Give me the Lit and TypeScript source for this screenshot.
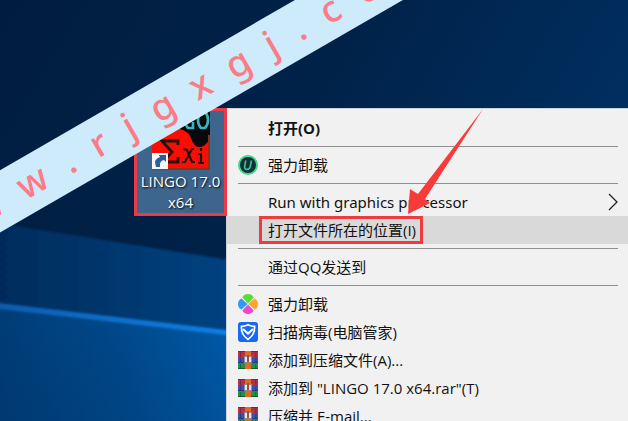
import { LitElement, html, css, svg, nothing, type TemplateResult } from "lit";
import { customElement, property } from "lit/decorators.js";

type IconName = "uninstall" | "pinwheel" | "shield" | "archive";

interface MenuEntry {
  label: string;
  icon?: IconName;
  strong?: boolean;
  current?: boolean;
  submenu?: boolean;
}

const GROUPS: MenuEntry[][] = [
  [{ label: "打开(O)", strong: true }],
  [{ label: "强力卸载", icon: "uninstall" }],
  [
    { label: "Run with graphics processor", submenu: true },
    { label: "打开文件所在的位置(I)", current: true },
  ],
  [{ label: "通过QQ发送到" }],
  [
    { label: "强力卸载", icon: "pinwheel" },
    { label: "扫描病毒(电脑管家)", icon: "shield" },
    { label: "添加到压缩文件(A)...", icon: "archive" },
    { label: '添加到 "LINGO 17.0 x64.rar"(T)', icon: "archive" },
    { label: "压缩并 E-mail...", icon: "archive" },
  ],
];

const ICONS: Record<IconName, TemplateResult> = {
  uninstall: svg`
    <circle cx="10" cy="10" r="10" fill="#3fd98a"/>
    <circle cx="10" cy="10" r="8" fill="#12303c"/>
    <path d="M7.8 5.5 6.7 11.4q-.4 3 2.3 3t3.3-3l1.1-5.9" fill="none" stroke="#3bbf8d" stroke-width="1.7"/>`,
  pinwheel: svg`
    <path d="M10 9.6 4.4 3.4Q6 0 10 0t5.6 3.4Z" fill="#5bdc35"/>
    <path d="M10.4 10 16.6 4.4Q20 6 20 10t-3.4 5.6Z" fill="#ffa42c"/>
    <path d="M10 10.4 15.6 16.6Q14 20 10 20t-5.6-3.4Z" fill="#ee45d0"/>
    <path d="M9.6 10 3.4 15.6Q0 14 0 10t3.4-5.6Z" fill="#2c9cf5"/>`,
  shield: svg`
    <rect width="20" height="20" rx="3" fill="#1769f2"/>
    <path d="M10 2.8Q13 4.4 16.6 4.4 17 13 10 17.4 3 13 3.4 4.4 7 4.4 10 2.8Z" fill="none" stroke="#fff" stroke-width="1.7"/>
    <path d="m5 7 5 4.6L15 7" fill="none" stroke="#fff" stroke-width="2"/>`,
  archive: svg`
    <rect y="1" width="20" height="6" fill="#b82f48"/>
    <rect y="1" width="20" height="1" fill="#8d2038"/>
    <rect y="7" width="20" height="6" fill="#3a50b4"/>
    <rect y="12" width="20" height="1" fill="#253682"/>
    <rect y="13" width="20" height="6" fill="#229148"/>
    <rect y="18" width="20" height="1" fill="#14602c"/>
    <path d="M2.5 2v5M17.8 2v5M2.5 8v4M17.8 8v4M2.5 14v4M17.8 14v4" stroke="#1d1e3b" stroke-opacity=".4"/>
    <rect x="7" y="1" width="6" height="18" fill="#e06a22"/>
    <rect x="6" y="6" width="8" height="7" fill="#8e8795"/>
    <path d="M8 7v5M12 7v5" stroke="#fff" stroke-width="1.6"/>
    <rect x="9" y="5" width="2" height="7" fill="#b04a2a"/>`,
};

@customElement("context-menu")
class ContextMenu extends LitElement {
  @property({ attribute: false }) groups: MenuEntry[][] = [];

  static styles = css`
    :host {
      display: block;
      box-sizing: border-box;
      padding: 5px 0;
      border: 1px solid #cfd3d8;
      border-right: 0;
      background: #f1f1f1;
      color: #111;
    }
    .group {
      display: flex;
      flex-direction: column;
    }
    .rule {
      height: 1px;
      margin: 4px 10px 4px 11px;
      border: 0;
      background: #8f8f8f;
    }
    .item {
      display: grid;
      grid-template-columns: 20px 1fr auto;
      align-items: center;
      column-gap: 10px;
      height: 28px;
      padding: 0 10px 0 11px;
      border: 0;
      background: none;
      color: inherit;
      font: inherit;
      line-height: 22px;
      text-align: left;
      white-space: nowrap;
    }
    .current {
      background: #d9d9d9;
    }
    .strong {
      font-weight: 700;
    }
    .parent {
      font-family: "Noto Sans", sans-serif;
    }
    .label {
      grid-column: 2;
      justify-self: start;
    }
    .marked {
      margin-left: -6px;
      padding: 0 4px 0 6px;
      outline: 3px solid #ee3a41;
    }
    .icon {
      width: 20px;
      height: 20px;
    }
    .chevron {
      width: 10px;
      height: 18px;
    }
  `;

  private item(entry: MenuEntry) {
    const kind = [
      "item",
      entry.current && "current",
      entry.strong && "strong",
      entry.submenu && "parent",
    ].filter(Boolean).join(" ");
    return html`<button class=${kind} role="menuitem">
      ${entry.icon
        ? html`<svg class="icon" viewBox="0 0 20 20" aria-hidden="true">${ICONS[entry.icon]}</svg>`
        : nothing}
      <span class="label ${entry.current ? "marked" : ""}">${entry.label}</span>
      ${entry.submenu
        ? html`<svg class="chevron" viewBox="0 0 10 18" aria-hidden="true">
            <path d="m1 1 8 8-8 8" fill="none" stroke="#222" stroke-width="1.3" />
          </svg>`
        : nothing}
    </button>`;
  }

  render() {
    return this.groups.map(
      (group, i) => html`${i ? html`<hr class="rule" />` : nothing}
        <div class="group" role="group">${group.map((entry) => this.item(entry))}</div>`,
    );
  }
}

@customElement("app-root")
class AppRoot extends LitElement {
  static styles = css`
    :host {
      display: block;
      position: relative;
      height: 100vh;
      overflow: hidden;
      background: #00234b;
      font: 15px/20px "Open Sans", "Noto Sans CJK SC", sans-serif;
    }
    .wallpaper,
    .arrow {
      position: absolute;
      top: 0;
      left: 0;
      width: 628px;
      height: 421px;
      pointer-events: none;
    }
    .arrow {
      z-index: 3;
    }
    .desktop {
      position: relative;
      display: flex;
      align-items: flex-start;
      padding: 108px 0 0 134px;
    }
    .shortcut {
      position: relative;
      z-index: 1;
      display: flex;
      flex: none;
      flex-direction: column;
      align-items: center;
      box-sizing: border-box;
      width: 93px;
      height: 108px;
      padding: 0;
      border: 3px solid #ee3a45;
      background: #3e658e;
      color: #fff;
      font: inherit;
      line-height: 21px;
      text-shadow: 1px 1px 2px #000;
      white-space: nowrap;
    }
    .app {
      flex: none;
      width: 58px;
      height: 60px;
    }
    .menu {
      flex: 1;
      margin-left: -1px;
    }
    .band {
      position: absolute;
      z-index: 2;
      top: 228px;
      left: -100px;
      display: flex;
      gap: 22px;
      box-sizing: border-box;
      width: 900px;
      height: 54px;
      padding-left: 19px;
      background: #cdebfa;
      color: #fb7b86;
      font: 500 37px/50px "Noto Sans", sans-serif;
      transform: rotate(-30deg);
      transform-origin: 0 0;
    }
  `;

  render() {
    return html`
      <svg class="wallpaper" viewBox="0 0 628 421" aria-hidden="true">
        <defs>
          <linearGradient id="sky" x2="1" y2="0.4">
            <stop offset="0" stop-color="#001d3f" />
            <stop offset="0.5" stop-color="#002249" />
            <stop offset="1" stop-color="#003062" />
          </linearGradient>
          <linearGradient id="mid" gradientUnits="userSpaceOnUse" x2="226">
            <stop offset="0" stop-color="#002c5c" />
            <stop offset="1" stop-color="#004280" />
          </linearGradient>
          <linearGradient id="low" gradientUnits="userSpaceOnUse" x2="226">
            <stop offset="0" stop-color="#003d78" />
            <stop offset="0.55" stop-color="#004a8d" />
            <stop offset="1" stop-color="#005baa" />
          </linearGradient>
          <linearGradient id="shade" x2="0" y2="1">
            <stop offset="0" stop-color="#001d40" stop-opacity="0" />
            <stop offset="1" stop-color="#001d40" stop-opacity="0.15" />
          </linearGradient>
          <linearGradient id="beam" gradientUnits="userSpaceOnUse" x2="226">
            <stop offset="0" stop-color="#0a5cae" />
            <stop offset="1" stop-color="#0b80e6" />
          </linearGradient>
          <filter id="soft"><feGaussianBlur stdDeviation="1" /></filter>
        </defs>
        <rect width="628" height="421" fill="url(#sky)" />
        <path d="M-9 222 235 261V430H-9Z" fill="url(#mid)" filter="url(#soft)" />
        <path d="M-9 305 235 333V430H-9Z" fill="url(#low)" />
        <path d="M-9 305 235 333V430H-9Z" fill="url(#shade)" />
        <path d="M-9 302 235 331V336L-9 308Z" fill="url(#beam)" filter="url(#soft)" />
      </svg>
      <main class="desktop">
        <button class="shortcut">
          <svg class="app" viewBox="0 0 58 60" aria-hidden="true">
            <path d="M0 0h58v59H0Z" fill="#fb0d05" />
            <path d="M24 0h34v27q-4 9-11 9-5 0-8-9-3-7-11-9Z" fill="#08090b" />
            <path d="M41 2h-5q-3 2-3 7t3 8h5v-6M49 1q-3 3-3 8t3 8h4q3-3 3-8t-3-8Z" fill="none" stroke="#37b5c2" stroke-width="2.6" />
            <path d="M26 34v-4H10l10 11-9 10h15v-5" fill="none" stroke="#26100b" stroke-width="2.8" />
            <path d="m31 38 4 1 5 12h3M42 38h-2L33 51h-3M46 43h3v9M46 52h6M49 37v3" fill="none" stroke="#26100b" stroke-width="2.2" />
            <path d="M57 24v35M16 58h42" stroke="#9c2c0c" stroke-width="2" />
            <path d="M0 42h16v16H0Z" fill="#f7f7f7" />
            <path d="M4 56q-3-8 4-10l-1-2h7v7l-2-2q-5 1-4 7Z" fill="#275f9f" />
          </svg>
          <span>LINGO 17.0<br />x64</span>
        </button>
        <context-menu class="menu" role="menu" .groups=${GROUPS}></context-menu>
      </main>
      <div class="band">${[..."www.rjgxgj.com"].map((c) => html`<span>${c}</span>`)}</div>
      <svg class="arrow" viewBox="0 0 628 421" aria-hidden="true">
        <path d="m408 214 2-25 8 5 65-85-58 90 5 4Z" fill="#f93a3a" />
      </svg>
    `;
  }
}
